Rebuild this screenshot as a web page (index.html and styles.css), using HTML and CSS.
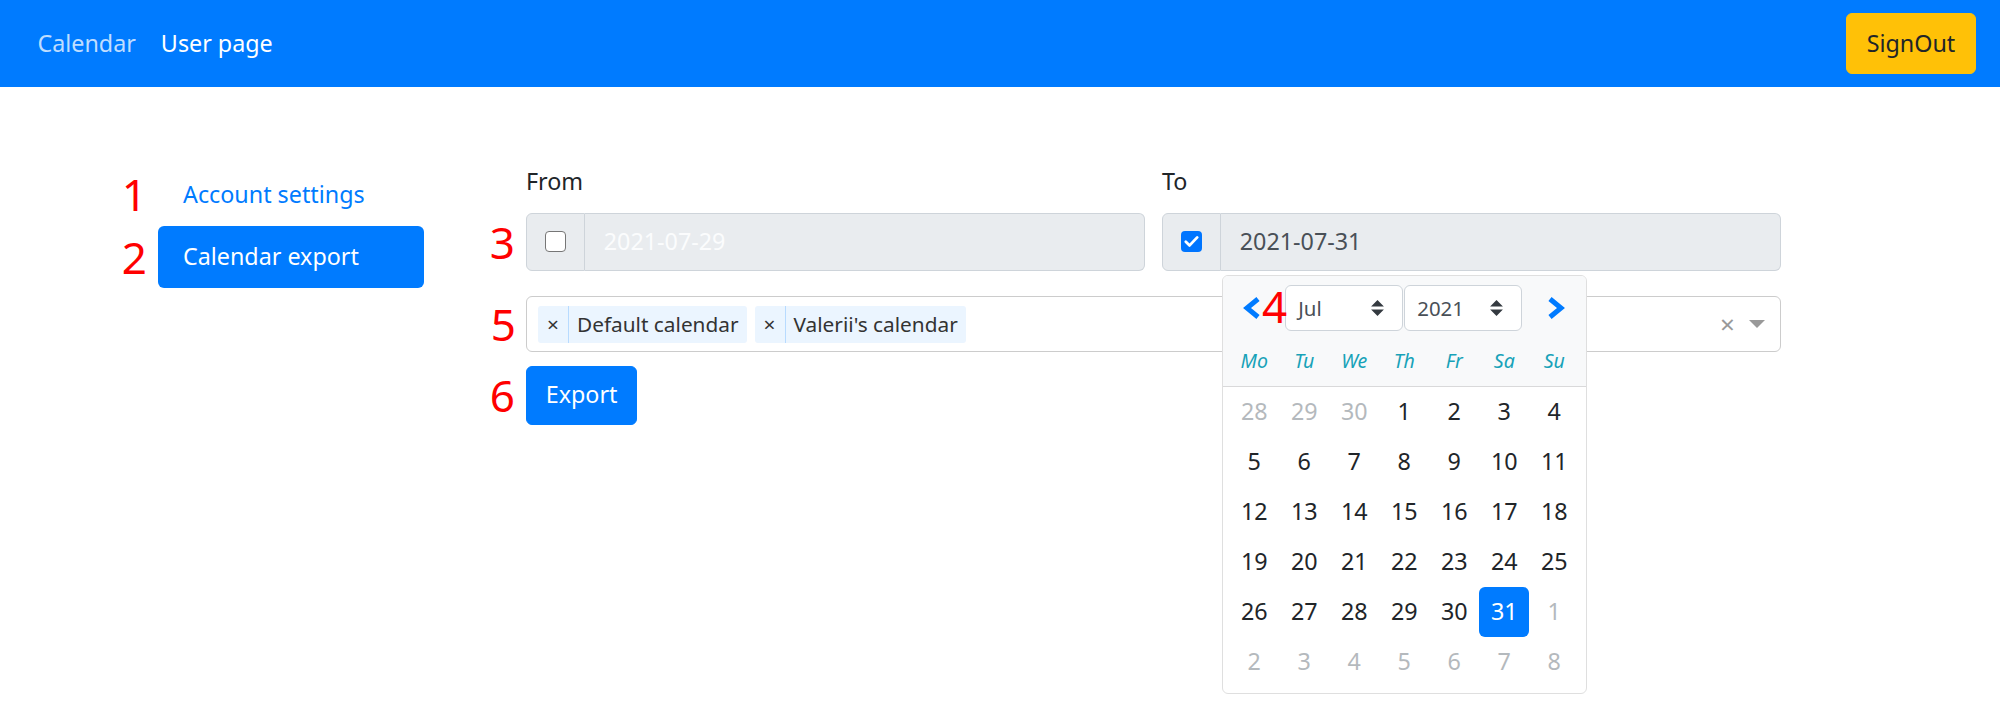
FILE: index.html
```html
<!DOCTYPE html>
<html lang="en">
<head>
<meta charset="utf-8">
<title>User page</title>
<link rel="stylesheet" href="styles.css">
</head>
<body>
<nav class="navbar">
  <div class="nav-links">
    <a class="nav-link">Calendar</a>
    <a class="nav-link active">User page</a>
  </div>
  <button class="btn btn-warning">SignOut</button>
</nav>

<main class="page">
  <aside class="side">
    <ul class="pills">
      <li class="pill"><span class="anno">1</span><a>Account settings</a></li>
      <li class="pill active"><span class="anno">2</span><a>Calendar export</a></li>
    </ul>
  </aside>

  <section class="content">
    <div class="date-row">
      <div class="field">
        <label class="label">From</label>
        <div class="input-group">
          <span class="anno">3</span>
          <div class="addon"><span class="check"></span></div>
          <div class="date-input disabled">2021-07-29</div>
        </div>
      </div>
      <div class="field">
        <label class="label">To</label>
        <div class="input-group">
          <div class="addon">
            <span class="check checked">
              <svg width="21" height="21" viewBox="0 0 21 21"><path d="M4.8 10.8 L8.6 14.4 L16.2 6.4" fill="none" stroke="#fff" stroke-width="2.8" stroke-linecap="round" stroke-linejoin="round"/></svg>
            </span>
          </div>
          <div class="date-input">2021-07-31</div>

          <div class="dp">
            <span class="anno anno-dp">4</span>
            <div class="dp-header">
              <div class="dp-nav">
                <div class="dp-arrow prev">
                  <svg width="20" height="24" viewBox="0 0 20 24"><polyline points="17,3 6,12 17,21" fill="none" stroke="#007bff" stroke-width="5"/></svg>
                </div>
                <div class="dp-selects">
                  <div class="dp-select"><span>Jul</span>
                    <svg width="13" height="16" viewBox="0 0 4 5"><path d="M2 0L0 2h4zm0 5L0 3h4z" fill="#343a40"/></svg>
                  </div>
                  <div class="dp-select"><span>2021</span>
                    <svg width="13" height="16" viewBox="0 0 4 5"><path d="M2 0L0 2h4zm0 5L0 3h4z" fill="#343a40"/></svg>
                  </div>
                </div>
                <div class="dp-arrow next">
                  <svg width="20" height="24" viewBox="0 0 20 24"><polyline points="3,3 14,12 3,21" fill="none" stroke="#007bff" stroke-width="5"/></svg>
                </div>
              </div>
              <div class="dp-weekdays">
                <span>Mo</span><span>Tu</span><span>We</span><span>Th</span><span>Fr</span><span>Sa</span><span>Su</span>
              </div>
            </div>
            <div class="dp-days">
              <span class="day out">28</span><span class="day out">29</span><span class="day out">30</span><span class="day">1</span><span class="day">2</span><span class="day">3</span><span class="day">4</span>
              <span class="day">5</span><span class="day">6</span><span class="day">7</span><span class="day">8</span><span class="day">9</span><span class="day">10</span><span class="day">11</span>
              <span class="day">12</span><span class="day">13</span><span class="day">14</span><span class="day">15</span><span class="day">16</span><span class="day">17</span><span class="day">18</span>
              <span class="day">19</span><span class="day">20</span><span class="day">21</span><span class="day">22</span><span class="day">23</span><span class="day">24</span><span class="day">25</span>
              <span class="day">26</span><span class="day">27</span><span class="day">28</span><span class="day">29</span><span class="day">30</span><span class="day sel">31</span><span class="day out">1</span>
              <span class="day out">2</span><span class="day out">3</span><span class="day out">4</span><span class="day out">5</span><span class="day out">6</span><span class="day out">7</span><span class="day out">8</span>
            </div>
          </div>
        </div>
      </div>
    </div>

    <div class="ms">
      <span class="anno">5</span>
      <div class="ms-values">
        <span class="tag"><span class="tag-x">×</span><span class="tag-label">Default calendar</span></span>
        <span class="tag"><span class="tag-x">×</span><span class="tag-label">Valerii's calendar</span></span>
      </div>
      <span class="ms-clear">×</span>
      <span class="ms-arrow"><i></i></span>
    </div>

    <div class="actions">
      <span class="anno">6</span>
      <button class="btn btn-primary">Export</button>
    </div>
  </section>
</main>
</body>
</html>
```

FILE: styles.css
```css
* { box-sizing: border-box; }
html, body { margin: 0; }
html { min-height: 100%; }
body {
  min-height: 705px;
  font-family: "Noto Sans", "Open Sans", sans-serif;
  font-size: 23.3px;
  line-height: 37.5px;
  color: #212529;
  background: #fff;
}

/* navbar */
.navbar {
  height: 87px;
  background: #007bff;
  display: flex;
  align-items: center;
  justify-content: space-between;
  padding: 0 24px 0 25px;
}
.nav-links { display: flex; }
.nav-link {
  padding: 0 12.5px;
  color: rgba(255, 255, 255, .75);
  text-decoration: none;
}
.nav-link.active { color: #fff; }

.btn {
  font: inherit;
  border: 1.5px solid transparent;
  border-radius: 6px;
  cursor: pointer;
}
.btn-warning {
  background: #ffc107;
  border-color: #ffc107;
  color: #212529;
  height: 61px;
  width: 130px;
  padding: 0;
}
.btn-primary {
  background: #007bff;
  border-color: #007bff;
  color: #fff;
  height: 59px;
  padding: 0 18.75px;
}

/* annotations */
.anno {
  position: absolute;
  right: calc(100% + 11px);
  top: 50%;
  transform: translateY(-50%);
  color: #ff0000;
  font-size: 44px;
  line-height: 1;
  font-family: "Noto Sans", sans-serif;
}

/* page */
.page {
  display: flex;
  padding: 76px 219px 0 158px;
}
.side {
  width: 266px;
  margin-right: 102px;
  flex: none;
}
.content { flex: 1; min-width: 0; }

.pills { list-style: none; margin: 0; padding: 0; }
.pill { position: relative; }
.pill a {
  display: block;
  padding: 12.5px 25px;
  color: #007bff;
  border-radius: 6px;
}
.pill.active a { background: #007bff; color: #fff; }

/* dates */
.date-row {
  display: grid;
  grid-template-columns: 1fr 1fr;
  gap: 17px;
  margin-bottom: 25px;
}
.label { display: block; margin-bottom: 12px; }
.input-group {
  position: relative;
  display: flex;
  height: 58px;
}
.addon {
  width: 59px;
  flex: none;
  display: flex;
  align-items: center;
  justify-content: center;
  background: #e9ecef;
  border: 1.5px solid #ced4da;
  border-radius: 6px 0 0 6px;
}
.date-input {
  flex: 1;
  display: flex;
  align-items: center;
  padding-left: 18.75px;
  background: #e9ecef;
  border: 1.5px solid #ced4da;
  border-left: 0;
  border-radius: 0 6px 6px 0;
  color: #495057;
}
.date-input.disabled { color: #fbfcfd; }

.check {
  width: 21px;
  height: 21px;
  border: 1.5px solid #767676;
  border-radius: 4px;
  background: #fff;
  display: block;
}
.check.checked {
  border: 0;
  background: #0075ff;
}
.check svg { display: block; }

/* datepicker */
.dp {
  position: absolute;
  top: calc(100% + 4px);
  left: 60px;
  width: 364.5px;
  border: 1px solid #dfdfdf;
  border-radius: 6px;
  background: #fff;
  z-index: 10;
  overflow: hidden;
}
.anno-dp {
  right: auto;
  left: 39px;
  top: 8px;
  transform: none;
  z-index: 2;
}
.dp-header { background: #f8f9fa; padding-top: 6.25px; }
.dp-nav {
  display: flex;
  align-items: center;
  height: 53px;
}
.dp-arrow {
  flex: 1;
  display: flex;
  align-items: center;
  height: 50px;
}
.dp-arrow svg { display: block; }
.dp-arrow.prev { justify-content: flex-start; padding-left: 18px; }
.dp-arrow.next { justify-content: flex-end; padding-right: 19px; }
.dp-selects { display: flex; width: 237px; gap: 1px; }
.dp-select {
  flex: 1;
  height: 46px;
  border: 1.5px solid #ced4da;
  border-radius: 6px;
  background: #fff;
  display: flex;
  align-items: center;
  justify-content: space-between;
  padding: 0 18.75px 0 12px;
  font-size: 20.4px;
  color: #495057;
}
.dp-select svg { display: block; }
.dp-weekdays {
  display: grid;
  grid-template-columns: repeat(7, 50px);
  padding: 0 6.25px;
  height: 52px;
  border-bottom: 1px solid rgba(0, 0, 0, .125);
}
.dp-weekdays span {
  display: flex;
  align-items: center;
  justify-content: center;
  color: #17a2b8;
  font-style: italic;
  font-size: 19.5px;
}
.dp-days {
  display: grid;
  grid-template-columns: repeat(7, 50px);
  grid-auto-rows: 50px;
  padding: 0 6.25px 6.25px;
}
.day {
  display: flex;
  align-items: center;
  justify-content: center;
  border-radius: 6px;
}
.day.out { color: #6c757d; opacity: .5; }
.day.sel { background: #007bff; color: #fff; }

/* multiselect */
.ms {
  position: relative;
  display: flex;
  align-items: flex-start;
  height: 56px;
  border: 1.5px solid #ccc;
  border-radius: 6px;
  margin-bottom: 14px;
}
.ms-values {
  flex: 1;
  display: flex;
  padding: 9.5px 0 0 11px;
}
.tag {
  display: flex;
  background: #ebf5ff;
  border-radius: 3px;
  margin-right: 8px;
  font-size: 20.8px;
  line-height: 33.75px;
  color: #333;
}
.tag-x {
  width: 31px;
  text-align: center;
  border-right: 1.5px solid #b8dbff;
  padding: 1.5px 0;
}
.tag-label { padding: 1.5px 8px; }
.ms-clear {
  width: 27px;
  align-self: center;
  text-align: center;
  color: #999;
  font-size: 26px;
  line-height: 1;
}
.ms-arrow {
  width: 39px;
  padding-right: 8px;
  align-self: center;
  display: flex;
  justify-content: center;
}
.ms-arrow i {
  display: block;
  width: 0;
  height: 0;
  border-style: solid;
  border-color: #999 transparent transparent;
  border-width: 8px 8px 4px;
  margin-top: 4px;
}

.actions { position: relative; display: inline-block; }
```
